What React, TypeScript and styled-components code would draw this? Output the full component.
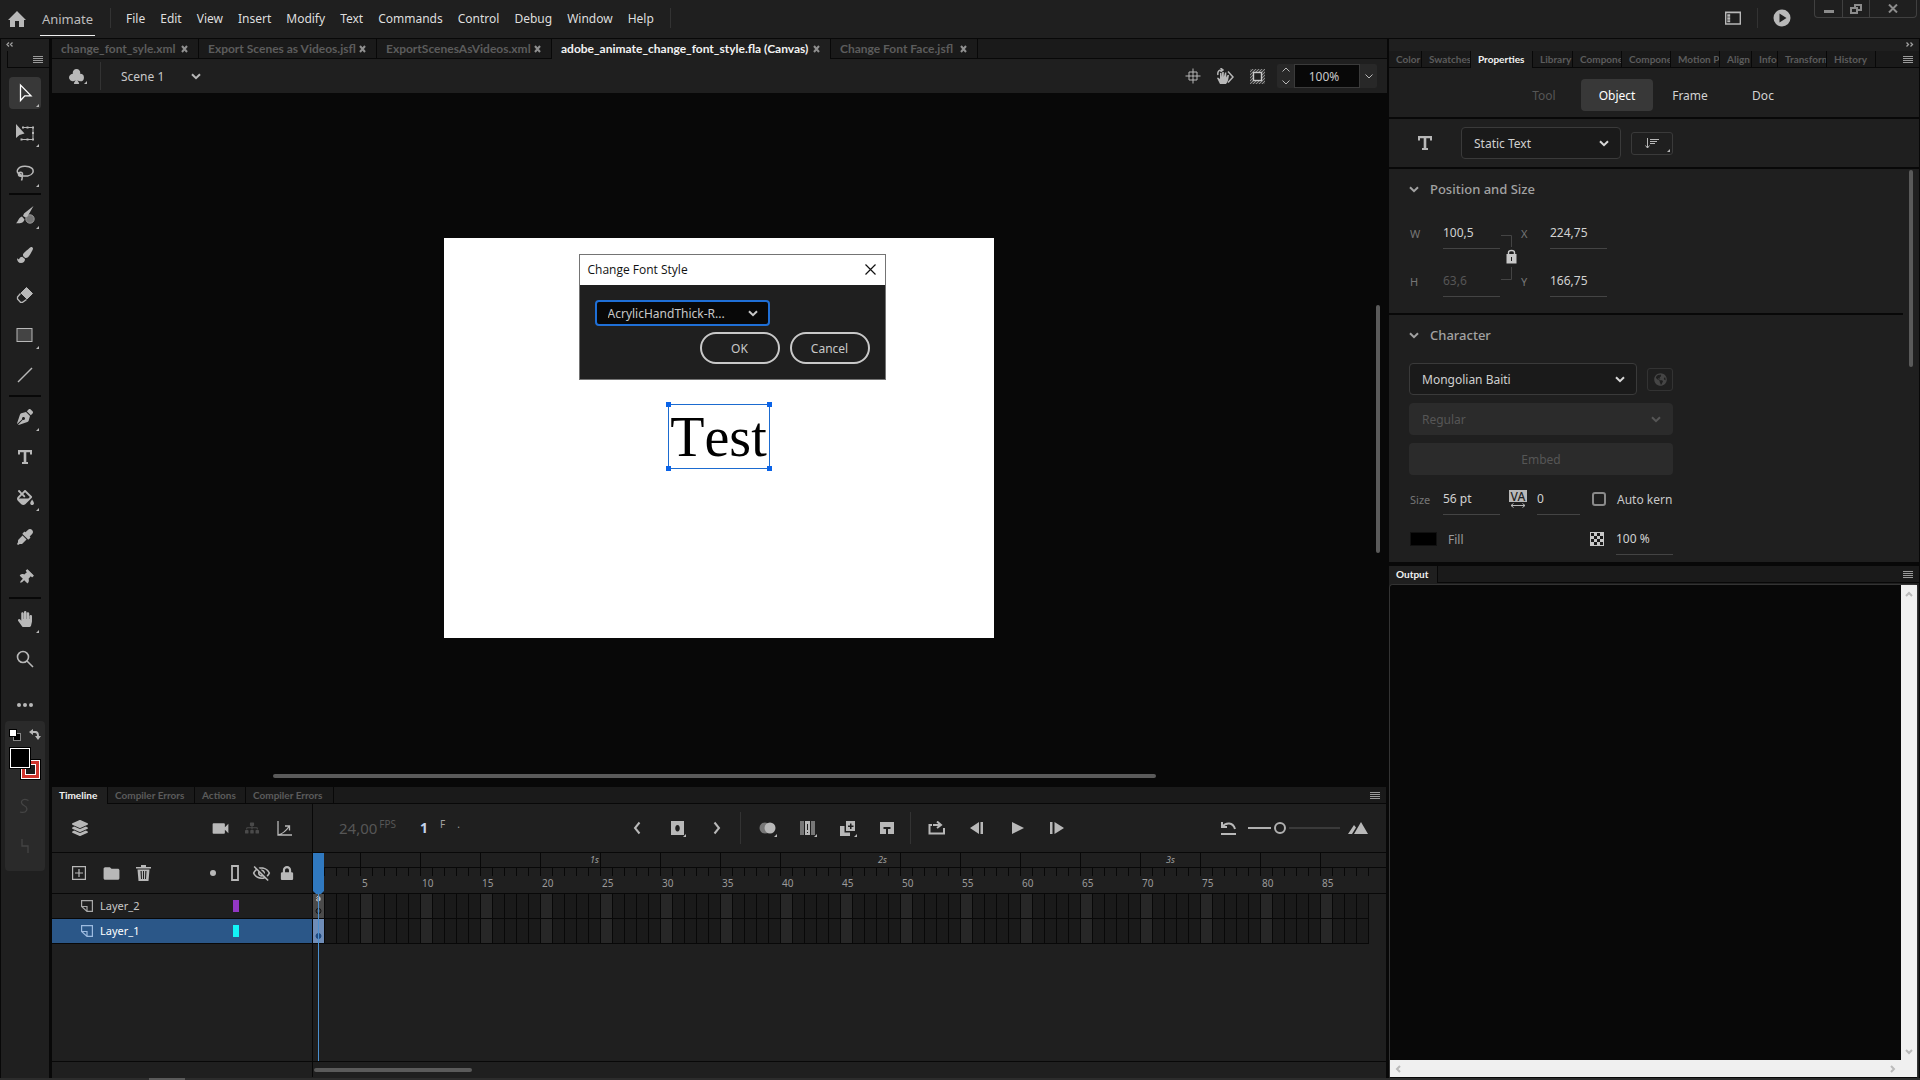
import React from "react";
import styled, { createGlobalStyle } from "styled-components";
import {
  FaFillDrip,
  FaGlobeAmericas,
  FaHandPaper,
  FaLayerGroup,
  FaLock,
  FaPaintBrush,
  FaPenNib,
  FaSitemap,
  FaThumbtack,
  FaEyeDropper,
} from "react-icons/fa";
import { BsSuitClubFill } from "react-icons/bs";
import { MdFolder, MdOutlineVisibilityOff, MdVideocam } from "react-icons/md";

const c = {
  bg: "#1f1f1f",
  dark: "#1a1a1a",
  line: "#080808",
  rule: "#3a3a3a",
  bar: "#5a5a5a",
  icon: "#b8b8b8",
  text: "#d2d2d2",
  soft: "#9a9a9a",
  dim: "#565656",
  off: "#2b2b2b",
};

const Global = createGlobalStyle`
  * { box-sizing: border-box; }
  body { margin: 0; background: ${c.line}; }
  body, button, input, select, textarea { font-family: "Noto Sans", "Open Sans", sans-serif; font-size: 12px; }
  button, input, select, textarea { margin: 0; padding: 0; border: 0; background: none; color: inherit; border-radius: 0; outline: none; }
  h2 { margin: 0; }
  svg { display: block; flex: none; }
`;

/* ---------- shell ---------- */
const Shell = styled.div`
  height: 100vh;
  display: flex;
  flex-direction: column;
  color: ${c.text};
  background: ${c.line};
  overflow: hidden;
`;
const Main = styled.main`
  flex: 1;
  min-height: 0;
  display: flex;
  gap: 2px;
`;
const Center = styled.div`
  flex: 1;
  min-width: 0;
  display: flex;
  flex-direction: column;
`;
const Side = styled.aside`
  width: 530px;
  margin-right: 1px;
  display: flex;
  flex-direction: column;
  gap: 4px;
`;
const Footer = styled.footer`
  height: 2px;
  background: #2c2c2c;
  padding-left: 149px;
`;
const FooterMark = styled.div`
  width: 36px;
  height: 2px;
  background: ${c.bar};
`;

/* ---------- header ---------- */
const Header = styled.header`
  height: 39px;
  display: flex;
  background: ${c.bg};
  border-bottom: 1px solid ${c.line};
`;
const HomeLink = styled.a`
  display: flex;
  align-items: center;
  padding: 0 14px 0 8px;
  color: ${c.icon};
`;
const Brand = styled.a`
  width: 55px;
  height: 36px;
  display: flex;
  align-items: center;
  justify-content: center;
  border-bottom: 1px solid #f0f0f0;
  font-size: 13px;
  padding-top: 2px;
  color: #bdbdbd;
  text-decoration: none;
`;
const HRule = styled.i<{ $gap: number }>`
  width: 1px;
  height: 20px;
  margin: 8px ${(p) => p.$gap}px 0;
  background: #333;
`;
const Menu = styled.nav`
  display: flex;
  gap: 15px;
  height: 37px;
  align-items: center;
  button { color: #dedede; white-space: nowrap; }
`;
const HeaderEnd = styled.div`
  margin-left: auto;
  display: flex;
  align-items: flex-start;
`;
const HeaderButton = styled.button`
  height: 36px;
  width: 32px;
  display: grid;
  place-items: center;
  color: ${c.icon};
`;
const WindowButtons = styled.div`
  display: flex;
  margin: 0 3px 0 16px;
  border: 1px solid #404040;
  border-top: 0;
  border-radius: 0 0 4px 4px;
`;
const WindowButton = styled.button<{ $wide?: boolean }>`
  width: ${(p) => (p.$wide ? 47 : 27)}px;
  height: 17px;
  display: grid;
  place-items: center;
  color: #8c8c8c;
  & + & { border-left: 1px solid #404040; }
`;

/* ---------- shared panel parts ---------- */
const CollapseRow = styled.div<{ $end?: boolean }>`
  height: 11px;
  padding: 0 5px;
  display: flex;
  align-items: center;
  justify-content: ${(p) => (p.$end ? "flex-end" : "flex-start")};
  background: ${c.bg};
  margin-bottom: 1px;
  color: #a0a0a0;
`;
const TabBar = styled.div<{ $h: number }>`
  height: ${(p) => p.$h}px;
  flex: none;
  display: flex;
  background: ${c.dark};
  border-bottom: 1px solid ${c.line};
`;
const Tab = styled.button<{ $on?: boolean; $w: number }>`
  width: ${(p) => p.$w}px;
  flex: none;
  display: flex;
  align-items: center;
  padding: 0 0 ${(p) => (p.$on ? 2 : 0)}px 7px;
  overflow: hidden;
  white-space: nowrap;
  font-family: Lato, "Noto Sans", sans-serif;
  font-weight: 700;
  font-size: 10px;
  color: ${(p) => (p.$on ? "#f2f2f2" : "#5c5c5c")};
  background: ${(p) => (p.$on ? c.bg : "transparent")};
  border-right: 1px solid ${c.line};
  margin-bottom: ${(p) => (p.$on ? -1 : 0)}px;
`;
const DocTab = styled(Tab)`
  padding: 0 10px ${(p) => (p.$on ? 1 : 0)}px 9px;
  justify-content: space-between;
  font-size: 12px;
  svg { color: #8f8f8f; }
`;
const PanelMenu = styled.button`
  margin-left: auto;
  padding: 1px 6px 0;
  display: grid;
  place-items: center;
  color: #9a9a9a;
`;

/* ---------- tool rail ---------- */
const Rail = styled.div`
  width: 50px;
  border-left: 1px solid ${c.line};
  border-right: 1px solid ${c.line};
  display: flex;
  flex-direction: column;
  background: ${c.bg};
`;
const RailTop = styled.div`
  height: 17px;
  margin-left: 6px;
  display: flex;
  border: 1px solid ${c.line};
  border-top: 0;
  border-right: 0;
`;
const Tools = styled.div`
  display: flex;
  flex-direction: column;
  gap: 8px;
  padding: 9px 7px 0 8px;
`;
const Tool = styled.button<{ $on?: boolean }>`
  position: relative;
  width: 32px;
  height: 32px;
  display: grid;
  place-items: center;
  border-radius: 4px;
  color: ${(p) => (p.$on ? "#fff" : c.icon)};
  background: ${(p) => (p.$on ? "#383838" : "transparent")};
`;
const Corner = styled.i<{ $x?: number; $y?: number }>`
  position: absolute;
  right: ${(p) => p.$x ?? 2}px;
  bottom: ${(p) => p.$y ?? 2}px;
  border-left: 3px solid transparent;
  border-bottom: 3px solid #b8b8b8;
`;
const Pin = styled(FaThumbtack)`
  transform: rotate(45deg);
`;
const ToolRule = styled.hr`
  width: 32px;
  height: 2px;
  margin: -4px 0;
  border: 0;
  background: ${c.line};
`;
const MoreTool = styled(Tool)`
  margin-top: 6px;
`;
const ColorBox = styled.div`
  width: 40px;
  height: 150px;
  margin: 0 4px;
  background: #2a2a2a;
  border-radius: 4px;
  display: flex;
  flex-direction: column;
  align-items: center;
`;
const ColorRow = styled.div`
  height: 26px;
  padding-top: 2px;
  display: flex;
  align-items: center;
  gap: 8px;
  color: ${c.icon};
`;
const Ghosts = styled.div`
  margin-top: 6px;
`;
const Ghost = styled.button`
  width: 40px;
  height: 40px;
  display: grid;
  place-items: center;
  color: #444;
`;

/* ---------- document ---------- */
const SceneBar = styled.div`
  height: 34px;
  flex: none;
  display: flex;
  align-items: center;
  background: ${c.bg};
  color: ${c.icon};
`;
const SymbolButton = styled.button`
  position: relative;
  width: 49px;
  height: 28px;
  display: grid;
  place-items: center;
  border-right: 1px solid #333;
`;
const SceneSelect = styled.label`
  display: flex;
  align-items: center;
  padding-left: 20px;
  position: relative;
  select { appearance: none; width: 82px; height: 24px; color: #c8c8c8; }
  svg { position: absolute; right: 2px; pointer-events: none; }
`;
const SceneTools = styled.div`
  margin-left: auto;
  display: flex;
  align-items: center;
  padding-right: 10px;
`;
const SceneTool = styled.button`
  width: 32px;
  height: 24px;
  display: grid;
  place-items: center;
`;
const Zoom = styled.div`
  display: flex;
  height: 24px;
  margin-left: 4px;
  background: #282828;
  border-radius: 2px;
  input {
    width: 66px;
    border: 1px solid #3a3a3a;
    background: ${c.line};
    color: #c8c8c8;
    text-align: center;
    padding-right: 6px;
  }
`;
const ZoomButton = styled.button`
  width: 17px;
  display: flex;
  flex-direction: column;
  justify-content: center;
  align-items: center;
  gap: 8px;
`;
const Workspace = styled.section`
  position: relative;
  flex: 1;
  min-height: 0;
  display: flex;
  align-items: center;
  justify-content: center;
  padding: 0 2px 4px 0;
  background: ${c.line};
`;
const Stage = styled.div`
  position: relative;
  width: 550px;
  height: 400px;
  background: #fff;
`;
const Selection = styled.div`
  position: absolute;
  left: 224px;
  top: 166px;
  width: 102px;
  height: 65px;
  display: grid;
  place-items: center;
  border: 1px solid #1b6bd0;
  font: 56px/62px "Liberation Serif", serif;
  font-kerning: none;
  color: #000;
`;
const Handle = styled.i<{ $r?: boolean; $b?: boolean }>`
  position: absolute;
  width: 5px;
  height: 5px;
  background: #0a63e8;
  ${(p) => (p.$r ? "right" : "left")}: -3px;
  ${(p) => (p.$b ? "bottom" : "top")}: -3px;
`;
const VBar = styled.div`
  position: absolute;
  right: 7px;
  top: 212px;
  width: 4px;
  height: 248px;
  border-radius: 2px;
  background: ${c.bar};
`;
const HBar = styled.div`
  position: absolute;
  left: 221px;
  bottom: 9px;
  width: 883px;
  height: 4px;
  border-radius: 2px;
  background: ${c.bar};
`;
const Dialog = styled.div`
  position: absolute;
  left: 135px;
  top: 16px;
  width: 307px;
  border: 1px solid #747474;
  background: #1f1f1f;
`;
const DialogTitle = styled.div`
  height: 30px;
  display: flex;
  align-items: center;
  justify-content: space-between;
  padding: 0 9px 2px 8px;
  background: #fff;
  color: #111;
  font-family: "Open Sans", "Noto Sans", sans-serif;
  font-size: 12px;
`;
const DialogBody = styled.div`
  padding: 15px;
`;
const FontSelect = styled.label`
  position: relative;
  display: flex;
  align-items: center;
  width: 175px;
  height: 26px;
  select {
    appearance: none;
    width: 100%;
    height: 26px;
    padding-left: 11px;
    border: 2px solid #1f6fd6;
    border-radius: 4px;
    background: ${c.line};
    color: #c8c8c8;
  }
  svg { position: absolute; right: 12px; color: #c8c8c8; pointer-events: none; }
`;
const DialogActions = styled.div`
  display: flex;
  justify-content: flex-end;
  gap: 10px;
  margin-top: 6px;
  button {
    width: 80px;
    height: 32px;
    border: 2px solid #c8c8c8;
    border-radius: 16px;
    color: #c8c8c8;
  }
`;

/* ---------- timeline ---------- */
const TimelinePanel = styled.section`
  flex: none;
  display: flex;
  flex-direction: column;
  margin-right: 1px;
  background: ${c.bg};
  border-bottom: 1px solid ${c.bg};
`;
const TimelineGrid = styled.div`
  display: grid;
  grid-template-columns: 261px minmax(0, 1fr);
  grid-template-rows: 49px 41px 168px 15px;
`;
const Cell = styled.div<{ $left?: boolean; $last?: boolean }>`
  position: relative;
  min-width: 0;
  border-bottom: ${(p) => (p.$last ? 0 : 1)}px solid ${c.line};
  border-right: ${(p) => (p.$left ? 1 : 0)}px solid ${c.line};
`;
const Bar = styled(Cell)<{ $pad?: number }>`
  display: flex;
  align-items: center;
  padding-left: ${(p) => p.$pad ?? 0}px;
  color: ${c.icon};
`;
const IconButton = styled.button<{ $w?: number; $dim?: boolean }>`
  position: relative;
  width: ${(p) => p.$w ?? 32}px;
  height: 32px;
  flex: none;
  display: grid;
  place-items: center;
  color: ${(p) => (p.$dim ? "#4a4a4a" : "inherit")};
`;
const Push = styled.div<{ $pr: number }>`
  margin-left: auto;
  padding-right: ${(p) => p.$pr}px;
  display: flex;
  align-items: center;
`;
const Rate = styled.div`
  display: flex;
  width: 304px;
  padding-left: 26px;
  font-size: 15px;
  color: ${c.dim};
  sup { font-size: 10px; line-height: 12px; padding-left: 2px; }
`;
const FrameNo = styled.div`
  display: flex;
  margin-left: 24px;
  font-size: 14px;
  font-weight: 700;
  color: #c4d4ea;
  gap: 10px;
  sup { font-weight: 400; color: #a0a0a0; }
`;
const BarRule = styled.i`
  width: 1px;
  height: 32px;
  margin: 0 6px 0 3px;
  background: #333;
`;
const Slider = styled.input`
  appearance: none;
  width: 92px;
  height: 16px;
  margin-left: 4px;
  background: linear-gradient(90deg, #b0b0b0 0 23px, transparent 23px 41px, #3a3a3a 41px) center / 100% 2px no-repeat;
  &::-webkit-slider-thumb {
    appearance: none;
    width: 12px;
    height: 12px;
    border: 2px solid #b0b0b0;
    border-radius: 50%;
    background: ${c.bg};
  }
`;
const Ruler = styled(Cell)`
  display: grid;
  grid-template-rows: 15px 25px;
`;
const RulerRow = styled.div<{ $top?: boolean }>`
  display: flex;
  border-bottom: ${(p) => (p.$top ? 1 : 0)}px solid ${c.line};
  overflow: hidden;
`;
const Second = styled.div<{ $mark: boolean }>`
  flex: 0 0 12px;
  min-width: 0;
  padding-left: 1px;
  font-size: 9px;
  font-style: italic;
  line-height: 14px;
  white-space: nowrap;
  color: #a0a0a0;
  border-right: 1px solid ${(p) => (p.$mark ? c.line : "transparent")};
`;
const Tick = styled.div`
  flex: 0 0 12px;
  min-width: 0;
  padding-left: 1px;
  font-size: 10px;
  line-height: 31px;
  color: #9a9a9a;
  background: linear-gradient(${c.line}, ${c.line}) right top / 1px 8px no-repeat;
`;
const LayerRow = styled.button<{ $on?: boolean }>`
  width: 100%;
  height: 25px;
  display: flex;
  align-items: center;
  gap: 7px;
  padding: 0 73px 1px 29px;
  border-bottom: 1px solid ${c.line};
  background: ${(p) => (p.$on ? "#2b5788" : "transparent")};
  font-size: 11px;
  color: ${(p) => (p.$on ? "#fff" : "#c8c8c8")};
  svg { color: ${(p) => (p.$on ? "#9dbbe0" : "#a8a8a8")}; }
`;
const Swatch = styled.i<{ $c: string }>`
  width: 6px;
  height: 12px;
  margin-left: auto;
  background: ${(p) => p.$c};
`;
const FrameRow = styled.div`
  display: flex;
  width: 1056px;
  height: 25px;
  border-bottom: 1px solid ${c.line};
`;
const Frame = styled.div<{ $c: string }>`
  flex: 0 0 12px;
  border-right: 1px solid ${c.line};
  background: ${(p) => p.$c};
`;
const Playhead = styled.div`
  position: absolute;
  z-index: 1;
  left: 0;
  top: 0;
  color: #3079c0;
`;
const PlayLine = styled.i`
  position: absolute;
  left: 5px;
  top: 0;
  bottom: 0;
  width: 1px;
  background: #4a90d0;
`;
const TimeBar = styled.div`
  width: 158px;
  height: 4px;
  margin: 6px 0 0 1px;
  border-radius: 2px;
  background: ${c.bar};
`;

/* ---------- properties ---------- */
const Properties = styled.section`
  background: ${c.bg};
  padding-bottom: 7px;
`;
const Modes = styled.div`
  display: flex;
  justify-content: center;
  gap: 1px;
  padding: 11px 1px 6px 0;
  border-bottom: 2px solid ${c.line};
`;
const Mode = styled.button<{ $on?: boolean }>`
  width: 72px;
  height: 32px;
  border-radius: 4px;
  background: ${(p) => (p.$on ? "#383838" : "transparent")};
  color: ${(p) => (p.$on ? "#fff" : c.text)};
  &:disabled { color: ${c.dim}; }
`;
const KindRow = styled.div`
  display: flex;
  align-items: center;
  height: 50px;
  padding-left: 28px;
  border-bottom: 2px solid ${c.line};
  color: ${c.icon};
  > svg { margin-right: 28px; }
`;
const Drop = styled.label<{ $w: number; $off?: boolean }>`
  position: relative;
  display: flex;
  align-items: center;
  width: ${(p) => p.$w}px;
  height: 32px;
  select {
    appearance: none;
    width: 100%;
    height: 32px;
    padding-left: 12px;
    border: 1px solid ${(p) => (p.$off ? c.off : c.rule)};
    border-radius: 4px;
    background: ${(p) => (p.$off ? c.off : c.dark)};
    color: ${(p) => (p.$off ? c.dim : "#d0d0d0")};
    opacity: 1;
  }
  svg { position: absolute; right: 12px; color: ${(p) => (p.$off ? c.dim : "#d8d8d8")}; pointer-events: none; }
`;
const SmallButton = styled.button<{ $w: number }>`
  position: relative;
  width: ${(p) => p.$w}px;
  height: 23px;
  margin-left: 10px;
  display: grid;
  place-items: center;
  border: 1px solid ${c.rule};
  border-radius: 3px;
  &:disabled { color: #454545; border-color: #333; }
`;
const Scroll = styled.div`
  position: relative;
`;
const ScrollBar = styled.div`
  position: absolute;
  right: 6px;
  top: 1px;
  width: 4px;
  height: 197px;
  border-radius: 2px;
  background: ${c.bar};
`;
const Section = styled.section<{ $line?: boolean }>`
  margin-right: 16px;
  padding: 0 0 ${(p) => (p.$line ? 16 : 0)}px 20px;
  border-bottom: ${(p) => (p.$line ? 2 : 0)}px solid ${c.line};
`;
const SectionHead = styled.h2`
  height: 40px;
  margin-bottom: 8px;
  display: flex;
  align-items: center;
  gap: 11px;
  font-weight: 500;
  font-size: 13px;
  color: #a2a2a2;
`;
const SizeGrid = styled.div`
  display: grid;
  grid-template-columns: 33px 57px 21px 29px 57px;
  row-gap: 16px;
  padding-left: 1px;
  align-items: center;
`;
const Link = styled.div`
  grid-column: 3;
  grid-row: 1 / 3;
  color: #c8c8c8;
`;
const Label = styled.label`
  font-size: 11px;
  color: #767676;
`;
const Field = styled.input<{ $w?: number }>`
  width: ${(p) => p.$w ?? 57}px;
  height: 32px;
  border-bottom: 1px solid #444;
  color: #d2d2d2;
  &:disabled { color: ${c.dim}; }
`;
const Stack = styled.div`
  width: 264px;
  display: flex;
  flex-direction: column;
  gap: 8px;
`;
const Row = styled.div`
  display: flex;
  align-items: center;
  height: 32px;
`;
const Embed = styled.button`
  height: 32px;
  border-radius: 4px;
  background: ${c.off};
  color: ${c.dim};
`;
const SizeLabel = styled(Label)`
  width: 34px;
  padding-left: 1px;
`;
const IconGap = styled.span`
  margin: 0 10px 0 9px;
`;
const Check = styled.label`
  display: flex;
  align-items: center;
  gap: 11px;
  margin-left: 12px;
  white-space: nowrap;
  color: #c8c8c8;
  input { appearance: none; width: 14px; height: 14px; border: 2px solid #8a8a8a; border-radius: 3px; }
`;
const FillButton = styled.button`
  width: 27px;
  height: 14px;
  background: #000;
  border: 1px solid #111;
  margin: 0 11px 0 1px;
`;
const FillName = styled.span`
  color: ${c.soft};
`;
const FillEnd = styled.div`
  margin-left: auto;
  display: flex;
  align-items: center;
  gap: 12px;
  color: #c8c8c8;
`;

/* ---------- output ---------- */
const Output = styled.section`
  flex: 1;
  min-height: 0;
  display: flex;
  flex-direction: column;
  background: ${c.bg};
`;
const OutputBody = styled.div`
  flex: 1;
  min-height: 0;
  margin: 1px 1px 0 0;
  display: grid;
  grid-template: minmax(0, 1fr) 17px / minmax(0, 1fr) 16px;
  border: 1px solid #333;
  border-bottom-color: ${c.line};
  border-radius: 4px 4px 0 0;
  background: ${c.line};
`;
const OutputText = styled.textarea`
  resize: none;
  color: ${c.text};
  background: ${c.line};
  border-radius: 4px;
`;
const LightBar = styled.div<{ $row?: boolean }>`
  display: flex;
  flex-direction: ${(p) => (p.$row ? "row" : "column")};
  grid-column: ${(p) => (p.$row ? "1 / 3" : "auto")};
  padding-right: ${(p) => (p.$row ? 16 : 0)}px;
  justify-content: space-between;
  background: #f0f0f0;
  button { width: 16px; height: 17px; display: grid; place-items: center; color: #bbb; }
`;

/* ---------- drawings ---------- */
type IP = { d: string; w?: number; h?: number; s?: number; fill?: boolean; vb?: string };
const Ico = ({ d, w = 20, h, s = 2, fill, vb = "0 0 20 20" }: IP) => (
  <svg
    width={w}
    height={h ?? w}
    viewBox={vb}
    fill={fill ? "currentColor" : "none"}
    stroke={fill ? "none" : "currentColor"}
    strokeWidth={s}
    aria-hidden="true"
  >
    <path d={d} fillRule="evenodd" />
  </svg>
);
const Chevron = () => <Ico w={10} h={7} vb="0 0 10 7" d="M1 1.2 5 5.2 9 1.2" />;
const Thin = ({ up }: { up?: boolean }) => (
  <Ico w={8} h={5} vb="0 0 8 5" s={1} d={up ? "M.5 4.5 4 1 7.5 4.5" : "M.5.5 4 4 7.5.5"} />
);
const CloseX = () => <Ico w={7} h={8} vb="0 0 7 8" s={2} d="M1 1 6 7M6 1 1 7" />;
const Lines = () => <Ico w={10} h={8} vb="0 0 10 8" s={1} d="M0 .5H10M0 2.5H10M0 4.5H10M0 6.5H10" />;
const TypeT = () => (
  <Ico w={16} fill vb="0 0 16 16" d="M1 1H15V5.5H13V3.2H9.3V13H11V15H5V13H6.7V3.2H3V5.5H1Z" />
);

const toolGroups: { name: string; icon: React.ReactNode; corner?: boolean; on?: boolean }[][] = [
  [
    { name: "Selection", corner: true, on: true, icon: <Ico s={1.3} d="M5.5 2V17.5L9.8 12.8H16Z" /> },
    {
      name: "Free transform",
      corner: true,
      icon: (
        <svg width="20" height="20" viewBox="0 0 20 20">
          <path d="M7 4.5H18V16.5H6.5" fill="none" stroke="currentColor" />
          <path d="M1 1V15L4.5 12 9.5 10.5Z" fill="currentColor" />
          <path d="M7 3.5H9V5.5H7ZM11.5 3.5H13.5V5.5H11.5ZM17 3.5H19V5.5H17ZM17 9H19V11H17ZM17 15.5H19V17.5H17ZM11.5 15.5H13.5V17.5H11.5ZM5.5 15.5H7.5V17.5H5.5Z" fill="currentColor" />
        </svg>
      ),
    },
    {
      name: "Lasso",
      corner: true,
      icon: (
        <Ico s={1.5} d="M6 12.5C-1 9 3 3.5 9.5 3.2S19.5 6.5 17.6 10 10 13.5 7 12.5M7.5 11.2A2 2 0 1 0 5.5 13.2 2 2 0 0 0 7.5 11.2M4.500 10.5C7 13 8 14 6.5 17.5" />
      ),
    },
  ],
  [
    {
      name: "Fluid brush",
      corner: true,
      icon: (
        <svg width="20" height="20" viewBox="0 0 20 20">
          <circle cx="15" cy="14" r="4.2" fill="#777" stroke="#999" />
          <path d="M18.5 1 9 8.5 8 11 10.5 12.5 12.5 11.5ZM7 11.5 9.5 14.5C8.5 18.5 4 18.5 1 18.3 3.5 16 3.5 12.5 7 11.5Z" fill="currentColor" />
        </svg>
      ),
    },
    { name: "Brush", icon: <FaPaintBrush size={16} /> },
    {
      name: "Eraser",
      icon: (
        <svg width="20" height="20" viewBox="0 0 20 20">
          <path d="M11.5 2.5 17.5 8.5 12 14 6 8Z" fill="currentColor" stroke="currentColor" />
          <path d="M5.500 8.5 2.5 12V14L5.5 17.300H7.5L11.5 14.500" fill="none" stroke="currentColor" strokeWidth="1.3" />
        </svg>
      ),
    },
    {
      name: "Rectangle",
      corner: true,
      icon: (
        <svg width="18" height="16">
          <rect x="1" y="1.5" width="15" height="13" fill="#444" stroke="currentColor" />
        </svg>
      ),
    },
    { name: "Line", icon: <Ico s={1.4} d="M3 17 17 3" /> },
  ],
  [
    { name: "Pen", corner: true, icon: <FaPenNib size={16} /> },
    { name: "Text", icon: <TypeT /> },
    { name: "Paint bucket", corner: true, icon: <FaFillDrip size={17} /> },
    {
      name: "Eyedropper",
      icon: <FaEyeDropper size={16} />,
    },
    { name: "Asset warp", icon: <Pin size={15} /> },
  ],
  [
    { name: "Hand", corner: true, icon: <FaHandPaper size={16} /> },
    { name: "Zoom", icon: <Ico s={1.6} d="M13.5 8A5.500 5.500 0 1 1 2.5 8 5.500 5.500 0 0 1 13.5 8ZM12 12 18 18" /> },
  ],
];

type TabItem = [string, number, boolean?];
const docTabs: TabItem[] = [
  ["change_font_syle.xml", 147],
  ["Export Scenes as Videos.jsfl", 178],
  ["ExportScenesAsVideos.xml", 175],
  ["adobe_animate_change_font_style.fla (Canvas)", 279, true],
  ["Change Font Face.jsfl", 147],
];
const sideTabs: TabItem[] = [
  ["Color", 33],
  ["Swatches", 49],
  ["Properties", 62, true],
  ["Library", 40],
  ["Compone", 49],
  ["Compone", 49],
  ["Motion P", 49],
  ["Align", 32],
  ["Info", 26],
  ["Transform", 49],
  ["History", 49],
];
const timeTabs: TabItem[] = [
  ["Timeline", 56, true],
  ["Compiler Errors", 87],
  ["Actions", 51],
  ["Compiler Errors", 88],
];
const menus = ["File", "Edit", "View", "Insert", "Modify", "Text", "Commands", "Control", "Debug", "Window", "Help"];
const frames = Array.from({ length: 88 }, (_, i) => i + 1);
const layers = [
  { name: "Layer_2", color: "#9237c4", on: false },
  { name: "Layer_1", color: "#12f4f8", on: true },
];

const TabLabels = ({ items }: { items: TabItem[] }) => (
  <>
    {items.map(([t, w, on], i) => (
      <Tab key={i} $w={w} $on={on}>{t}</Tab>
    ))}
  </>
);

function TopHeader() {
  return (
    <Header>
      <HomeLink href="#" aria-label="Home">
        <Ico w={18} h={17} fill vb="0 0 18 17" d="M9 0 18 9H16V16H11V10H7V16H2V9H0Z" />
      </HomeLink>
      <Brand href="#">Animate</Brand>
      <HRule $gap={15} />
      <Menu>{menus.map((m) => <button key={m}>{m}</button>)}</Menu>
      <HRule $gap={16} />
      <HeaderEnd>
        <HeaderButton aria-label="Workspace">
          <Ico w={16} h={14} vb="0 0 16 14" s={1.4} d="M.7 1.5H15.3V13H.7ZM0 1.2H16M3 4H4.5V5H3ZM3 7H4.5V8H3ZM3 10H4.5V10.5H3Z" />
        </HeaderButton>
        <HRule $gap={8} />
        <HeaderButton aria-label="Test movie">
          <Ico w={18} fill vb="0 0 18 18" d="M9 .5A8.5 8.5 0 1 0 9 17.5 8.5 8.5 0 1 0 9 .5ZM6.5 4.5 13.5 9 6.5 13.5Z" />
        </HeaderButton>
        <WindowButtons>
          <WindowButton aria-label="Minimize"><Ico w={10} h={10} s={3} vb="0 0 10 10" d="M0 7.5H10" /></WindowButton>
          <WindowButton aria-label="Restore"><Ico w={12} h={10} vb="0 0 12 10" d="M5 4V1H11V6H7M1 4H7V9H1Z" /></WindowButton>
          <WindowButton $wide aria-label="Close"><Ico w={10} h={9} vb="0 0 10 9" s={2} d="M1 .5 9 8.5M9 .5 1 8.5" /></WindowButton>
        </WindowButtons>
      </HeaderEnd>
    </Header>
  );
}

function ToolRail() {
  return (
    <Rail>
      <CollapseRow><Ico w={7} h={5} vb="0 0 7 5" s={1.3} d="M3 .5 1 2.5 3 4.5M6.5 .5 4.5 2.5 6.5 4.5" /></CollapseRow>
      <RailTop><PanelMenu aria-label="Tools menu"><Lines /></PanelMenu></RailTop>
      <Tools>
        {toolGroups.map((g, i) => (
          <React.Fragment key={i}>
            {i > 0 && <ToolRule />}
            {g.map((t) => (
              <Tool key={t.name} $on={t.on} aria-label={t.name}>
                {t.icon}
                {t.corner && <Corner />}
              </Tool>
            ))}
          </React.Fragment>
        ))}
        <MoreTool aria-label="Edit toolbar">
          <svg width="16" height="4" fill="currentColor">
            <circle cx="2" cy="2" r="2" />
            <circle cx="8" cy="2" r="2" />
            <circle cx="14" cy="2" r="2" />
          </svg>
        </MoreTool>
      </Tools>
      <ColorBox>
        <ColorRow>
          <svg width="12" height="12">
            <rect x="4.5" y="4.5" width="7" height="7" fill="#000" stroke="#888" />
            <rect x=".5" y=".5" width="7" height="7" fill="#fff" stroke="#000" />
          </svg>
          <Ico w={12} h={12} vb="0 0 12 12" fill d="M4 0V2H6C9 2 10 3.5 10 7H12L9 11 6 7H8C8 5 7.5 4 6 4H4V6L0 3Z" />
        </ColorRow>
        <svg width="32" height="33" aria-label="Fill and stroke colors">
          <rect x="11.5" y="12.5" width="20" height="20" fill="#fff" stroke="#000" />
          <rect x="12.5" y="13.5" width="18" height="18" fill="#d0342c" stroke="#fff" />
          <rect x="16.5" y="17.5" width="10" height="10" fill="#1c1c1c" stroke="#fff" />
          <rect x=".5" y=".5" width="21" height="21" fill="#000" stroke="#000" />
          <rect x="1.5" y="1.5" width="19" height="19" fill="#000" stroke="#fff" />
        </svg>
        <Ghosts>
          <Ghost aria-label="Smooth"><Ico w={14} h={16} vb="0 0 14 16" s={1.3} d="M10.5 2.5C4-1 1 5 6 7.5S9 16 2 14" /></Ghost>
          <Ghost aria-label="Straighten"><Ico w={14} h={16} vb="0 0 14 16" s={1.3} d="M4 1V8H10V15" /></Ghost>
        </Ghosts>
      </ColorBox>
    </Rail>
  );
}

function FontDialog() {
  return (
    <Dialog role="dialog" aria-label="Change Font Style">
      <DialogTitle>
        Change Font Style
        <button aria-label="Close"><Ico w={11} vb="0 0 11 11" s={1.2} d="M.5 .5 10.5 10.5M10.5 .5 .5 10.5" /></button>
      </DialogTitle>
      <DialogBody>
        <FontSelect>
          <select aria-label="Font"><option>AcrylicHandThick-R...</option></select>
          <Chevron />
        </FontSelect>
        <DialogActions>
          <button>OK</button>
          <button>Cancel</button>
        </DialogActions>
      </DialogBody>
    </Dialog>
  );
}

function Document() {
  return (
    <>
      <TabBar $h={20}>
        {docTabs.map(([t, w, on]) => (
          <DocTab key={t} $w={w} $on={on}>{t}<CloseX /></DocTab>
        ))}
      </TabBar>
      <SceneBar>
        <SymbolButton aria-label="Edit symbols"><BsSuitClubFill size={17} /><Corner $x={13} $y={6} /></SymbolButton>
        <SceneSelect>
          <select aria-label="Scene"><option>Scene 1</option></select>
          <Chevron />
        </SceneSelect>
        <SceneTools>
          <SceneTool aria-label="Center stage"><Ico w={16} vb="0 0 16 16" s={1} d="M8 .5V6.5M8 9.5V15.5M.5 8H6.5M9.5 8H15.5M4 4H12V12H4ZM6.5 8H9.5M8 6.5V9.5" /></SceneTool>
          <SceneTool aria-label="Rotate stage">
            <svg width="18" height="17" viewBox="0 0 18 17" fill="none" stroke="currentColor">
              <path d="M2 7C1 3 4 1.5 6 2M4.5 0 7 2 4.5 4M12 3.5 17 9 12 14.5" strokeWidth="1.5" />
              <path d="M4 16 1 10 2 9.5 4 11V5H5.5V9L6.3 4H7.8V9L9 4.5H10.3V9.5L11.5 7H13C12.5 11 12 14 10 16Z" fill="currentColor" stroke="none" />
            </svg>
          </SceneTool>
          <SceneTool aria-label="Clip content">
            <svg width="15" height="15" viewBox="0 0 15 15">
              <rect width="15" height="15" fill="#3a3a3a" />
              <path d="M0 3 3 0M0 6 6 0M0 9 9 0M0 12 12 0M0 15 15 0M3 15 15 3M6 15 15 6M9 15 15 9M12 15 15 12" stroke="#8a8a8a" />
              <rect x="3.5" y="3.5" width="8" height="8" fill={c.bg} stroke="#c8c8c8" strokeWidth="1.4" />
            </svg>
          </SceneTool>
          <Zoom>
            <ZoomButton aria-label="Step zoom"><Thin up /><Thin /></ZoomButton>
            <input aria-label="Zoom" defaultValue="100%" />
            <ZoomButton aria-label="Zoom presets"><Thin /></ZoomButton>
          </Zoom>
        </SceneTools>
      </SceneBar>
      <Workspace>
        <Stage>
          <FontDialog />
          <Selection>Test<Handle /><Handle $r /><Handle $b /><Handle $r $b /></Selection>
        </Stage>
        <VBar />
        <HBar />
      </Workspace>
    </>
  );
}

function Timeline() {
  return (
    <TimelinePanel>
      <TabBar $h={17}>
        <TabLabels items={timeTabs} />
        <PanelMenu aria-label="Timeline menu"><Lines /></PanelMenu>
      </TabBar>
      <TimelineGrid>
        <Bar $left>
          <IconButton $w={56} aria-label="Layer view"><FaLayerGroup size={16} /></IconButton>
          <Push $pr={12}>
            <IconButton aria-label="Camera"><MdVideocam size={21} /></IconButton>
            <IconButton $dim aria-label="Parenting"><FaSitemap size={14} /></IconButton>
            <IconButton aria-label="Graph"><Ico w={15} h={15} vb="0 0 15 15" s={1.3} d="M1 0V14H15M1 14C5 13 9 10 12 5.5M8 5H12.5V9.5" /></IconButton>
          </Push>
        </Bar>
        <Bar>
          <Rate>24,00<sup>FPS</sup><FrameNo>1<sup>F</sup><sup>.</sup></FrameNo></Rate>
          <IconButton $w={40} aria-label="Previous keyframe"><Ico w={8} h={14} vb="0 0 8 14" d="M6.5 1.5 2 7 6.5 12.5" /></IconButton>
          <IconButton $w={40} aria-label="Insert keyframe"><Ico fill w={13} h={14} vb="0 0 13 14" d="M0 0H13V14H0ZM6.5 4C3.5 4 3.5 10.5 6.5 10.5S9.5 4 6.5 4Z" /><Corner $x={11} $y={7} /></IconButton>
          <IconButton $w={40} aria-label="Next keyframe"><Ico w={8} h={14} vb="0 0 8 14" d="M1.5 1.5 6 7 1.5 12.5" /></IconButton>
          <BarRule />
          <IconButton $w={40} aria-label="Onion skin">
            <svg width="17" height="12"><circle cx="6" cy="6" r="5.5" fill="#777" /><circle cx="11" cy="6" r="5.5" fill="currentColor" /></svg>
            <Corner $x={10} $y={7} />
          </IconButton>
          <IconButton $w={40} aria-label="Edit multiple frames">
            <svg width="15" height="14"><path d="M0 0H4V14H0ZM11 0H15V14H11Z" fill="#777" /><path d="M5 0H10V14H5ZM7 3V9H8V3ZM7 11V12H8V11Z" fillRule="evenodd" fill="currentColor" /></svg>
            <Corner $x={10} $y={7} />
          </IconButton>
          <IconButton $w={40} aria-label="Create tween"><Ico fill w={15} h={15} vb="0 0 15 15" d="M6 0H15V10H6ZM10 2.5V4.5H8V6H10V8H11.5V6H13.500V4.5H11.5V2.5ZM0 5H4.5V11.5H10V15H0Z" /><Corner $x={10} $y={7} /></IconButton>
          <IconButton $w={40} aria-label="Split audio"><Ico fill w={14} h={12} vb="0 0 14 12" d="M0 0H14V12H8V7H10.500V5H3.500V7H6V12H0Z" /></IconButton>
          <BarRule />
          <IconButton $w={40} aria-label="Loop"><Ico w={18} h={14} vb="0 0 18 14" s={2} d="M4 4H1.5V12.5H16V7M5 4H12M9 .5 13 4 9 7" /></IconButton>
          <IconButton $w={40} aria-label="Step back"><Ico fill w={14} h={12} vb="0 0 14 12" d="M9 0V12L0 6ZM10.5 0H13V12H10.5Z" /></IconButton>
          <IconButton $w={40} aria-label="Play"><Ico fill w={13} h={12} vb="0 0 13 12" d="M1 0 13 6 1 12Z" /></IconButton>
          <IconButton $w={40} aria-label="Step forward"><Ico fill w={14} h={12} vb="0 0 14 12" d="M0 0H2.5V12H0ZM4.5 0 14 6 4.5 12Z" /></IconButton>
          <Push $pr={10}>
            <IconButton $w={32} aria-label="Reset zoom"><Ico w={17} h={13} vb="0 0 17 13" s={2} d="M2 0V5H7M2 5C6 0 13 0 15 7M1 12H16" /></IconButton>
            <Slider type="range" aria-label="Timeline zoom" min={0} max={100} defaultValue={33} />
            <IconButton $w={36} aria-label="Fit timeline"><Ico fill w={20} h={12} vb="0 0 20 12" d="M13 0 20 12H6ZM6 3 8 5.5 4 12H0Z" /></IconButton>
          </Push>
        </Bar>
        <Bar $left $pad={11}>
          <IconButton aria-label="New layer"><Ico w={14} vb="0 0 14 14" s={1.2} d="M.6 .6H13.4V13.4H.6ZM7 3V11M3 7H11" /></IconButton>
          <IconButton aria-label="New folder"><MdFolder size={19} /></IconButton>
          <IconButton aria-label="Delete layer"><Ico fill w={15} h={16} vb="0 0 15 16" d="M5 0H10V2H15V3.5H0V2H5ZM1.5 4.5H13.5L12.5 16H2.5ZM4.5 6 5 14H6L5.7 6ZM7 6V14H8V6ZM9.3 6 9 14H10L10.5 6Z" /></IconButton>
          <Push $pr={13}>
            <IconButton $w={18} aria-label="Highlight"><Ico fill w={6} vb="0 0 6 6" d="M3 0A3 3 0 1 1 3 6 3 3 0 1 1 3 0Z" /></IconButton>
            <IconButton $w={26} aria-label="Outline"><Ico w={8} h={16} vb="0 0 8 16" s={1.8} d="M1 1H7V15H1Z" /></IconButton>
            <IconButton $w={27} aria-label="Hide layers"><MdOutlineVisibilityOff size={19} /></IconButton>
            <IconButton $w={24} aria-label="Lock layers"><FaLock size={14} /></IconButton>
          </Push>
        </Bar>
        <Ruler>
          <RulerRow $top>
            {frames.map((f) => (
              <Second key={f} $mark={f % 5 === 4}>{f % 24 === 0 ? `${f / 24}s` : ""}</Second>
            ))}
          </RulerRow>
          <RulerRow>
            {frames.map((f) => <Tick key={f}>{f % 5 === 0 ? f : ""}</Tick>)}
          </RulerRow>
          <Playhead><Ico fill w={11} h={41} vb="0 0 11 41" d="M0 0H11V38L8 41H3L0 38Z" /></Playhead>
        </Ruler>
        <Cell $left>
          {layers.map((l) => (
            <LayerRow key={l.name} $on={l.on}>
              <Ico w={12} vb="0 0 12 12" s={1.2} d="M.6 6.500V.6H11.4V11.4H6L.6 6.500H6V11.400" />
              {l.name}
              <Swatch $c={l.color} />
            </LayerRow>
          ))}
        </Cell>
        <Cell>
          {layers.map((l) => (
            <FrameRow key={l.name}>
              {frames.map((f) => (
                <Frame key={f} $c={f === 1 ? (l.on ? "#6f8db8" : "#4b4b4b") : f % 5 === 0 ? "#272727" : c.dark}>
                  {f === 1 && (
                    <svg width="11" height="24">
                      {!l.on && <path d="M3.5 3.5Q5 1 7 3.5V6.5M7 5Q3.5 4 3.5 6T7 6" fill="none" stroke="#ddd" />}
                      <circle cx="5.5" cy="17" r="2.5" fill={l.on ? "#1f4a80" : "none"} stroke={l.on ? "#1f4a80" : "#111"} />
                    </svg>
                  )}
                </Frame>
              ))}
            </FrameRow>
          ))}
          <PlayLine />
        </Cell>
        <Cell $left $last />
        <Cell $last><TimeBar /></Cell>
      </TimelineGrid>
    </TimelinePanel>
  );
}

function PropertiesPanel() {
  return (
    <Properties>
      <CollapseRow $end><Ico w={8} h={5} vb="0 0 8 5" s={1.3} d="M.5 .5 2.5 2.5 .5 4.5M4.5 .5 6.5 2.5 4.5 4.5" /></CollapseRow>
      <TabBar $h={17}>
        <TabLabels items={sideTabs} />
        <PanelMenu aria-label="Properties menu"><Lines /></PanelMenu>
      </TabBar>
      <Modes>
        <Mode disabled>Tool</Mode>
        <Mode $on>Object</Mode>
        <Mode>Frame</Mode>
        <Mode>Doc</Mode>
      </Modes>
      <KindRow>
        <TypeT />
        <Drop $w={160}>
          <select aria-label="Text type"><option>Static Text</option></select>
          <Chevron />
        </Drop>
        <SmallButton $w={42} aria-label="Text orientation">
          <Ico w={14} h={11} vb="0 0 14 11" s={1} d="M2.5 0V10M.5 7.5 2.5 10 4.5 7.5M5 1.5H14M5 3.5H12M5 5.5H10" />
          <Corner />
        </SmallButton>
      </KindRow>
      <Scroll>
        <Section $line>
          <SectionHead><Chevron />Position and Size</SectionHead>
          <SizeGrid>
            <Label htmlFor="w">W</Label>
            <Field id="w" defaultValue="100,5" />
            <Link>
              <svg width="21" height="48" viewBox="0 0 21 48" aria-hidden="true">
                <path d="M1 2.5H11.5V14M11.5 34V46.5H1" fill="none" stroke="#444" />
                <path d="M8.5 22V19.5Q8.5 17.5 11.5 17.5T14.5 19.5V22" fill="none" stroke="currentColor" strokeWidth="1.4" />
                <path d="M6.5 21H16.5V30.5H6.5ZM11 24V28H12V24Z" fill="currentColor" fillRule="evenodd" />
              </svg>
            </Link>
            <Label htmlFor="x">X</Label>
            <Field id="x" defaultValue="224,75" />
            <Label htmlFor="h">H</Label>
            <Field id="h" defaultValue="63,6" disabled />
            <Label htmlFor="y">Y</Label>
            <Field id="y" defaultValue="166,75" />
          </SizeGrid>
        </Section>
        <Section>
          <SectionHead><Chevron />Character</SectionHead>
          <Stack>
            <Row>
              <Drop $w={228}>
                <select aria-label="Font family"><option>Mongolian Baiti</option></select>
                <Chevron />
              </Drop>
              <SmallButton $w={26} disabled aria-label="Web fonts"><FaGlobeAmericas size={13} /></SmallButton>
            </Row>
            <Drop $w={264} $off>
              <select aria-label="Font style" disabled><option>Regular</option></select>
              <Chevron />
            </Drop>
            <Embed disabled>Embed</Embed>
            <Row>
              <SizeLabel htmlFor="size">Size</SizeLabel>
              <Field id="size" defaultValue="56 pt" />
              <IconGap>
                <svg width="18" height="18" viewBox="0 0 18 18" aria-hidden="true">
                  <rect width="18" height="12" fill={c.icon} />
                  <text x="9" y="10.5" textAnchor="middle" fontFamily="Noto Sans, sans-serif" fontWeight="500" fontSize="12" fill={c.bg}>VA</text>
                  <path d="M2 15.5H16M4.5 13.5 2 15.5 4.5 17.5M13.5 13.5 16 15.5 13.5 17.5" fill="none" stroke={c.icon} />
                </svg>
              </IconGap>
              <Field $w={43} aria-label="Tracking" defaultValue="0" />
              <Check><input type="checkbox" />Auto kern</Check>
            </Row>
            <Row>
              <FillButton aria-label="Fill color" />
              <FillName>Fill</FillName>
              <FillEnd>
                <svg width="14" height="14" viewBox="0 0 14 14" aria-hidden="true">
                  <rect width="14" height="14" fill="#c8c8c8" />
                  <path d="M1 1H4V4H1ZM7 1H10V4H7ZM4 4H7V7H4ZM10 4H13V7H10ZM1 7H4V10H1ZM7 7H10V10H7ZM4 10H7V13H4ZM10 10H13V13H10Z" fill="#1a1a1a" />
                </svg>
                <Field aria-label="Alpha" defaultValue="100 %" />
              </FillEnd>
            </Row>
          </Stack>
        </Section>
        <ScrollBar />
      </Scroll>
    </Properties>
  );
}

function OutputPanel() {
  return (
    <Output>
      <TabBar $h={17}>
        <Tab $on $w={49}>Output</Tab>
        <PanelMenu aria-label="Output menu"><Lines /></PanelMenu>
      </TabBar>
      <OutputBody>
        <OutputText aria-label="Output" readOnly />
        <LightBar>
          <button aria-label="Scroll up"><Ico w={8} h={6} vb="0 0 8 6" d="M1 5 4 2 7 5" /></button>
          <button aria-label="Scroll down"><Ico w={8} h={6} vb="0 0 8 6" d="M1 1 4 4 7 1" /></button>
        </LightBar>
        <LightBar $row>
          <button aria-label="Scroll left"><Ico w={6} h={8} vb="0 0 6 8" d="M5 1 2 4 5 7" /></button>
          <button aria-label="Scroll right"><Ico w={6} h={8} vb="0 0 6 8" d="M1 1 4 4 1 7" /></button>
        </LightBar>
      </OutputBody>
    </Output>
  );
}

export default function App() {
  return (
    <Shell>
      <Global />
      <TopHeader />
      <Main>
        <ToolRail />
        <Center>
          <Document />
          <Timeline />
        </Center>
        <Side>
          <PropertiesPanel />
          <OutputPanel />
        </Side>
      </Main>
      <Footer><FooterMark /></Footer>
    </Shell>
  );
}
